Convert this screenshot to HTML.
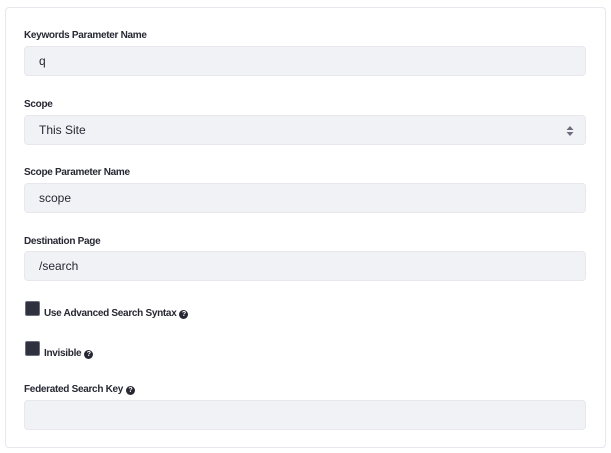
<!DOCTYPE html>
<html><head><style>
*{box-sizing:border-box;margin:0;padding:0}
body{width:611px;height:453px;background:#fff;font-family:"Liberation Sans",sans-serif;position:relative;overflow:hidden}
.card{position:absolute;left:5px;top:7px;width:601px;height:441px;border:1px solid #e7e7ed;border-radius:4px}
.lbl{position:absolute;left:24px;font-size:10px;font-weight:bold;color:#272833;letter-spacing:-0.3px}
.inp{position:absolute;left:24px;width:562px;height:30px;background:#f1f2f5;border:1px solid #e7e7ed;border-radius:4px;font-size:12px;color:#272833;line-height:28px;padding-left:14px}
.cb{position:absolute;left:25px;width:15px;height:15px;background:#30313f;border:1px solid #6b6c7e;border-radius:2px}
.ct{position:absolute;left:44px;font-size:10px;font-weight:bold;color:#272833;letter-spacing:-0.3px}
.q{display:inline-block;width:9px;height:9px;border-radius:50%;background:#272833;color:#fff;font-size:7px;line-height:9px;text-align:center;vertical-align:0px;margin-left:3px;letter-spacing:0}
</style></head><body>
<div class="card"></div>
<div class="lbl" style="top:30px">Keywords Parameter Name</div>
<div class="inp" style="top:46px">q</div>
<div class="lbl" style="top:99px">Scope</div>
<div class="inp" style="top:115px">This Site
<svg style="position:absolute;right:11px;top:9px" width="8" height="12" viewBox="0 0 8 12"><path d="M4 1L7.5 5H0.5Z M4 11L7.5 7H0.5Z" fill="#6b6c7e"/></svg></div>
<div class="lbl" style="top:167px">Scope Parameter Name</div>
<div class="inp" style="top:183px">scope</div>
<div class="lbl" style="top:236px">Destination Page</div>
<div class="inp" style="top:251px">/search</div>
<div class="cb" style="top:301px"></div>
<div class="ct" style="top:308px">Use Advanced Search Syntax<span class="q">?</span></div>
<div class="cb" style="top:341px"></div>
<div class="ct" style="top:348px">Invisible<span class="q">?</span></div>
<div class="lbl" style="top:384px">Federated Search Key<span class="q">?</span></div>
<div class="inp" style="top:400px"></div>
</body></html>
